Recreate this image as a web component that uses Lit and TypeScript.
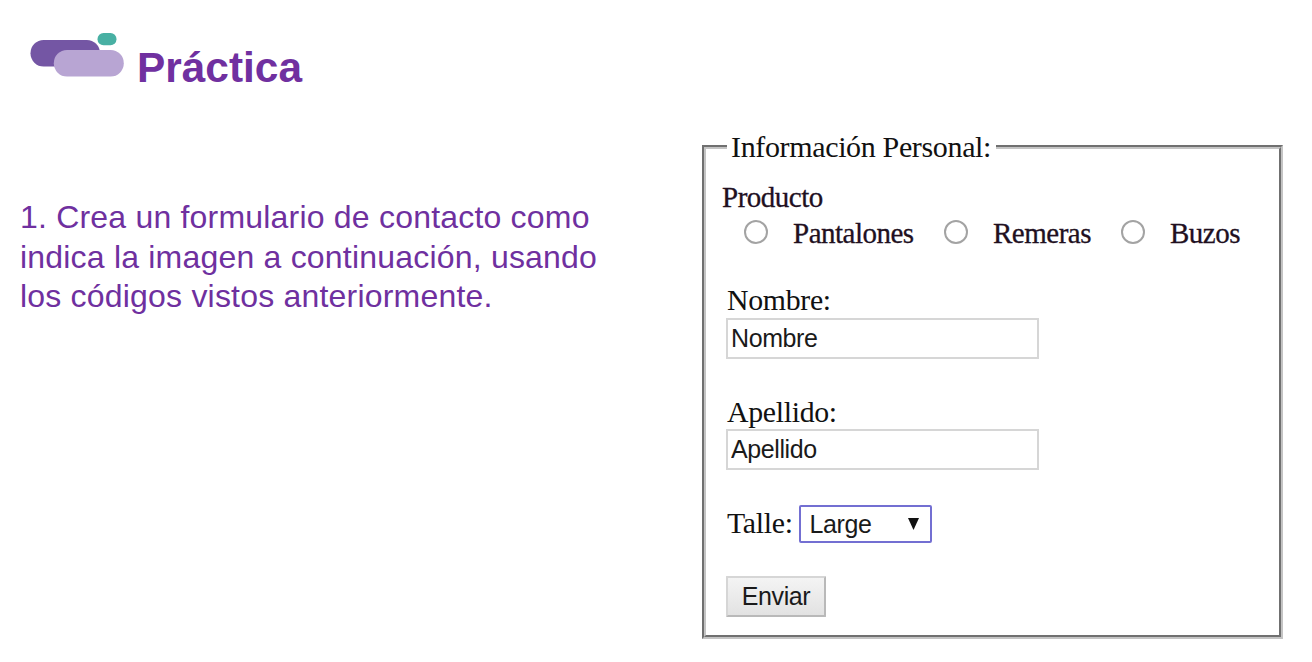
import { LitElement, html, css, svg } from "lit";
import { customElement } from "lit/decorators.js";

@customElement("practice-logo")
class PracticeLogo extends LitElement {
  static styles = css`
    :host { display: block; width: 94px; height: 45px; }
    svg { display: block; }
  `;
  render() {
    return html`<svg width="94" height="45" viewBox="0 0 94 45" aria-hidden="true">
      ${svg`<rect x="0.5" y="7" width="69.5" height="26.5" rx="13.2" fill="#7456a4"/>
      <rect x="23.8" y="17" width="70" height="26.5" rx="13.2" fill="#b8a5d3"/>
      <rect x="67.5" y="0" width="19" height="12.3" rx="6" fill="#48b0a3"/>`}
    </svg>`;
  }
}

@customElement("product-form")
class ProductForm extends LitElement {
  static styles = css`
    :host { display: block; }
    * { box-sizing: border-box; }
    .panel {
      margin: 0; width: 581px; height: 507px; min-width: 0;
      padding: 0 0 0 20px;
      border: 4px groove #c4c4c4;
      font: 29.8px/32px "Liberation Serif", serif;
      letter-spacing: -0.3px;
      color: #111;
    }
    .title {
      margin: 0 0 0 1px; padding: 0 0 0 4px; width: 269px; height: 30px;
      font-size: 30px; letter-spacing: -0.35px; line-height: 30px; white-space: nowrap;
    }
    .body { display: flex; flex-direction: column; align-items: flex-start; }
    .group, .options {
      font-size: 29px; letter-spacing: -0.5px;
      color: #21101f; -webkit-text-stroke: 0.3px #21101f;
    }
    .group { margin: 18px 0 0 -4px; height: 35px; line-height: 35px; }
    .options {
      display: grid; grid-template-columns: 200px 177px auto; height: 36px;
      margin: 0 0 0 18px; line-height: 36px;
    }
    .option { display: flex; align-items: center; gap: 25px; }
    .radio {
      appearance: none; width: 24px; height: 24px; margin: 0 0 3px;
      border: 2px solid #a3a3a3; border-radius: 50%; background: #fff;
    }
    .label { height: 32px; margin: 33px 0 0 1px; }
    .label.second { margin-top: 37px; }
    .field {
      width: 313px; height: 41px; margin: 2px 0 0; padding: 0 0 1px 3px;
      border: 2px solid #d6d6d6; border-radius: 0; outline: 0; background: #fff;
    }
    .field.last { margin-top: 1px; padding-bottom: 0; }
    .field, .select, .send {
      font: 25px "Liberation Sans", sans-serif; letter-spacing: -0.4px; color: #1a1a1a;
    }
    .size { display: flex; align-items: flex-start; gap: 6px; height: 38px; margin: 35px 0 0 1px; line-height: 36px; }
    .picker { display: grid; width: 133px; height: 38px; }
    .select, .arrow { grid-area: 1 / 1; }
    .select {
      appearance: none; margin: 0; padding: 0 0 0 9px; width: 133px; height: 38px;
      border: 2px solid #736fd2; border-radius: 2px; outline: 0; background: #fff;
    }
    .arrow { justify-self: end; align-self: center; margin: 0 13px 1px 0; pointer-events: none; z-index: 1; }
    .send {
      width: 100px; height: 41px; margin: 33px 0 0; padding: 0 0 1px;
      border: 2px solid #b9b9b9; border-color: #d6d6d6 #b9b9b9 #b9b9b9 #d6d6d6; border-radius: 1px;
      background: linear-gradient(#f4f4f4, #e2e2e2);
    }
  `;
  render() {
    return html`<fieldset class="panel">
      <legend class="title">Información Personal:</legend>
      <div class="body">
        <div class="group">Producto</div>
        <div class="options">
          ${["Pantalones", "Remeras", "Buzos"].map(
            (name) => html`<label class="option"><input class="radio" type="radio" name="producto" />${name}</label>`
          )}
        </div>
        <label class="label" for="nombre">Nombre:</label>
        <input class="field" id="nombre" value="Nombre" />
        <label class="label second" for="apellido">Apellido:</label>
        <input class="field last" id="apellido" value="Apellido" />
        <div class="size">
          <label for="talle">Talle:</label>
          <div class="picker">
            <select class="select" id="talle"><option>Large</option></select>
            <svg class="arrow" width="11" height="12" viewBox="0 0 11 12"><path d="M0 0H11L5.5 12Z" fill="#111"/></svg>
          </div>
        </div>
        <button class="send" type="button">Enviar</button>
      </div>
    </fieldset>`;
  }
}

@customElement("app-root")
class AppRoot extends LitElement {
  static styles = css`
    :host { display: block; width: 1312px; height: 662px; overflow: hidden; background: #fff; }
    .page { display: grid; grid-template-columns: 702px 581px; grid-template-rows: 132px 508px; }
    .head { grid-column: 1 / 3; display: flex; gap: 13px; padding: 33px 0 0 30px; }
    .heading {
      margin: 11px 0 0; height: 48px;
      font: bold 42.4px/48px "Liberation Sans", sans-serif; color: #7030a0;
    }
    .task {
      margin: 66px 0 0 20px; width: 620px;
      font: 32px/39.5px "Liberation Sans", sans-serif; letter-spacing: 0.2px; color: #6f309f;
    }
  `;
  render() {
    return html`<main class="page">
      <header class="head"><practice-logo></practice-logo><h1 class="heading">Práctica</h1></header>
      <p class="task">1. Crea un formulario de contacto como<br />indica la imagen a continuación, usando<br />los códigos vistos anteriormente.</p>
      <product-form></product-form>
    </main>`;
  }
}
